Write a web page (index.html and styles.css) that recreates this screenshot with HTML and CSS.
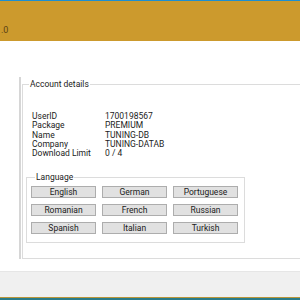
FILE: index.html
```html
<!DOCTYPE html>
<html>
<head>
<meta charset="utf-8">
<link rel="stylesheet" href="styles.css">
</head>
<body>
<div class="window">
  <header class="titlebar"><span class="title">.0</span></header>
  <main class="content">
    <div class="panel">
      <fieldset class="group account">
        <legend>Account details</legend>
        <dl class="details">
          <dt>UserID</dt><dd>1700198567</dd>
          <dt>Package</dt><dd>PREMIUM</dd>
          <dt>Name</dt><dd>TUNING-DB</dd>
          <dt>Company</dt><dd>TUNING-DATAB</dd>
          <dt>Download Limit</dt><dd>0 / 4</dd>
        </dl>
        <fieldset class="group language">
          <legend>Language</legend>
          <div class="buttons">
            <button>English</button>
            <button>German</button>
            <button>Portuguese</button>
            <button>Romanian</button>
            <button>French</button>
            <button>Russian</button>
            <button>Spanish</button>
            <button>Italian</button>
            <button>Turkish</button>
          </div>
        </fieldset>
      </fieldset>
    </div>
  </main>
  <footer class="statusbar"></footer>
</div>
</body>
</html>
```
FILE: styles.css
```css
html, body {
  margin: 0;
  padding: 0;
}
body {
  width: 300px;
  height: 300px;
  overflow: hidden;
  font-family: Roboto, "Liberation Sans", Arial, sans-serif;
  font-size: 8.5px;
  color: #1b1b1b;
  background: #ffffff;
}
.window {
  display: flex;
  flex-direction: column;
  height: 300px;
}
.titlebar {
  border-top: 1px solid #1c8fd2;
  background: #cc9a2d;
  display: flex;
  align-items: flex-end;
  padding: 0 0 6px 1px;
  box-sizing: content-box;
  height: 34px;
}
.title {
  font-size: 9px;
  color: #5b4214;
  line-height: 9px;
}
.content {
  height: 230px;
  background: #ffffff;
  padding: 36px 0 12px 19px;
  box-sizing: border-box;
  overflow: hidden;
  display: flex;
}
.panel {
  flex: 1;
  border-left: 2px solid #d6d6d6;
  padding: 0 0 0 1px;
  display: flex;
  flex-direction: column;
}
.group {
  margin: 0;
  border: 1px solid #dcdcdc;
  min-width: 0;
}
.group legend {
  padding: 0 1px;
  margin-left: 3px;
  line-height: 9px;
  font-size: 8.5px;
}
.account {
  flex: 1;
  margin-top: 3px;
  border-right: none;
  padding: 0 0 0 3px;
  width: 300px;
}
.details {
  display: grid;
  grid-template-columns: 73px auto;
  margin: 23px 0 15px 6px;
  line-height: 9.25px;
}
.details dt, .details dd {
  margin: 0;
}
.language {
  width: 207px;
  padding: 4px 6px 8px 4px;
}
.language legend {
  margin-left: 4px;
}
.buttons {
  display: grid;
  grid-template-columns: repeat(3, 65px);
  column-gap: 6px;
  row-gap: 6px;
}
.buttons button {
  height: 12px;
  margin: 0;
  padding: 0;
  border: 1px solid #adadad;
  background: #e1e1e1;
  font-family: Roboto, "Liberation Sans", Arial, sans-serif;
  font-size: 8.5px;
  line-height: 10px;
  color: #1b1b1b;
}
.statusbar {
  flex: 1;
  background: #f0f0f0;
  border-top: 1px solid #e6e6e6;
  border-bottom: 2px solid #2a7c8a;
  box-shadow: inset 0 -1px 0 #b8953a;
}
```
